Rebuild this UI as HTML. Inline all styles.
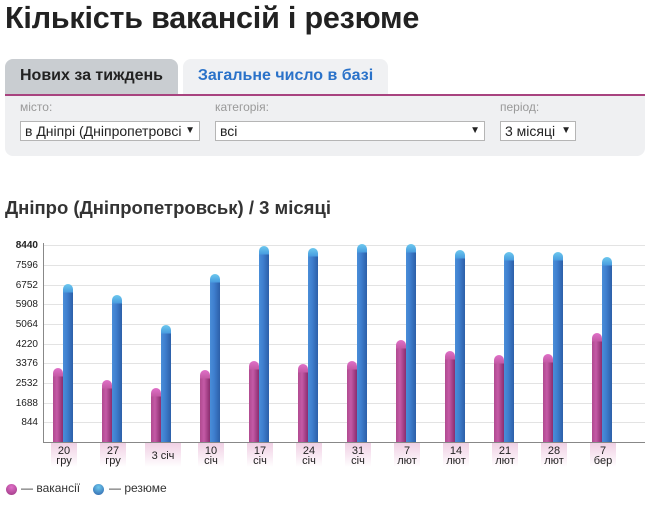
<!DOCTYPE html>
<html><head><meta charset="utf-8"><style>
body{margin:0;width:653px;height:517px;background:#fff;font-family:"Liberation Sans",sans-serif;position:relative;overflow:hidden}
.a{position:absolute}
h1{position:absolute;left:5px;top:1px;margin:0;font-size:30.5px;font-weight:bold;color:#222;letter-spacing:-0.2px}
.tab{position:absolute;top:59px;height:35px;border-radius:8px 8px 0 0;font-size:16px;font-weight:bold;line-height:33px;text-align:center}
.lbl{position:absolute;top:100px;font-size:12px;color:#999}
.sel{position:absolute;top:121px;border:1px solid #b5b5b5;background:#fff;font-size:14px;line-height:18px;padding-left:4px;color:#222;box-sizing:border-box;height:20px;white-space:nowrap;overflow:hidden}
.sel i{position:absolute;right:4px;top:0;font-style:normal;font-size:10px}
.g{position:absolute;left:44px;width:601px;height:1px;background:#e3e3e3}
.y{position:absolute;left:0;width:38px;text-align:right;font-size:10px;color:#222}
.v,.r{position:absolute;width:10px;border-radius:5px 5px 0 0;bottom:75px}
.v{background:linear-gradient(180deg,#e070c8 0,#c45aa6 8px,transparent 9px),linear-gradient(90deg,#b04a90,#c45aa6 40%,#8a2d6e)}
.r{background:linear-gradient(180deg,#6cc8ee 0,#4a9ee0 8px,transparent 9px),linear-gradient(90deg,#4a8ed8,#3f7fcf 40%,#2c5fa8)}
.xl{position:absolute;top:443px;width:26px;height:24px;text-align:center;font-size:11px;line-height:10px;color:#222;background:linear-gradient(#f0d0e4,#fff);padding-top:3px;box-sizing:border-box}
</style></head><body>
<h1>Кількість вакансій і резюме</h1>
<div class="tab" style="left:5px;width:173px;background:#c9cdd1;color:#222">Нових за тиждень</div>
<div class="tab" style="left:183px;width:205px;background:#f0f1f3;color:#2a72c9">Загальне число в базі</div>
<div class="a" style="left:5px;top:94px;width:640px;height:62px;background:#eff0f2;border-top:2px solid #a8437f;border-radius:0 0 8px 8px;box-sizing:border-box"></div>
<div class="lbl" style="left:20px">місто:</div>
<div class="lbl" style="left:215px">категорія:</div>
<div class="lbl" style="left:500px">період:</div>
<div class="sel" style="left:20px;width:180px">в Дніпрі (Дніпропетровсі<i>▼</i></div>
<div class="sel" style="left:215px;width:270px">всі<i>▼</i></div>
<div class="sel" style="left:500px;width:76px">3 місяці<i>▼</i></div>
<div class="a" style="left:5px;top:197px;font-size:18.5px;font-weight:bold;color:#333">Дніпро (Дніпропетровськ) / 3 місяці</div>

<div class="g" style="top:245px"></div><div class="g" style="top:265px"></div><div class="g" style="top:285px"></div><div class="g" style="top:304px"></div><div class="g" style="top:324px"></div><div class="g" style="top:344px"></div><div class="g" style="top:363px"></div><div class="g" style="top:383px"></div><div class="g" style="top:403px"></div><div class="g" style="top:422px"></div>
<div class="y" style="top:240px;font-weight:bold">8440</div>
<div class="y" style="top:260px">7596</div><div class="y" style="top:280px">6752</div><div class="y" style="top:299px">5908</div><div class="y" style="top:319px">5064</div><div class="y" style="top:339px">4220</div><div class="y" style="top:358px">3376</div><div class="y" style="top:378px">2532</div><div class="y" style="top:398px">1688</div><div class="y" style="top:417px">844</div>
<div class="a" style="left:43px;top:243px;width:1px;height:200px;background:#888"></div>
<div class="a" style="left:43px;top:442px;width:602px;height:1px;background:#888"></div>

<div class="v" style="left:53px;top:368px"></div><div class="r" style="left:63px;top:284px"></div>
<div class="v" style="left:102px;top:380px"></div><div class="r" style="left:112px;top:295px"></div>
<div class="v" style="left:151px;top:388px"></div><div class="r" style="left:161px;top:325px"></div>
<div class="v" style="left:200px;top:370px"></div><div class="r" style="left:210px;top:274px"></div>
<div class="v" style="left:249px;top:361px"></div><div class="r" style="left:259px;top:246px"></div>
<div class="v" style="left:298px;top:364px"></div><div class="r" style="left:308px;top:248px"></div>
<div class="v" style="left:347px;top:361px"></div><div class="r" style="left:357px;top:244px"></div>
<div class="v" style="left:396px;top:340px"></div><div class="r" style="left:406px;top:244px"></div>
<div class="v" style="left:445px;top:351px"></div><div class="r" style="left:455px;top:250px"></div>
<div class="v" style="left:494px;top:355px"></div><div class="r" style="left:504px;top:252px"></div>
<div class="v" style="left:543px;top:354px"></div><div class="r" style="left:553px;top:252px"></div>
<div class="v" style="left:592px;top:333px"></div><div class="r" style="left:602px;top:257px"></div>

<div class="xl" style="left:51px">20<br>гру</div>
<div class="xl" style="left:100px">27<br>гру</div>
<div class="xl" style="left:145px;width:36px;padding-top:8px">3 січ</div>
<div class="xl" style="left:198px">10<br>січ</div>
<div class="xl" style="left:247px">17<br>січ</div>
<div class="xl" style="left:296px">24<br>січ</div>
<div class="xl" style="left:345px">31<br>січ</div>
<div class="xl" style="left:394px">7<br>лют</div>
<div class="xl" style="left:443px">14<br>лют</div>
<div class="xl" style="left:492px">21<br>лют</div>
<div class="xl" style="left:541px">28<br>лют</div>
<div class="xl" style="left:590px">7<br>бер</div>

<div class="a" style="left:6px;top:484px;width:11px;height:11px;border-radius:50%;background:radial-gradient(circle at 50% 30%,#e070c8,#9a3580)"></div>
<div class="a" style="left:21px;top:481px;font-size:12px;color:#333">— вакансії</div>
<div class="a" style="left:93px;top:484px;width:11px;height:11px;border-radius:50%;background:radial-gradient(circle at 50% 30%,#6cc8ee,#2c5fa8)"></div>
<div class="a" style="left:109px;top:481px;font-size:12px;color:#333">— резюме</div>
</body></html>
